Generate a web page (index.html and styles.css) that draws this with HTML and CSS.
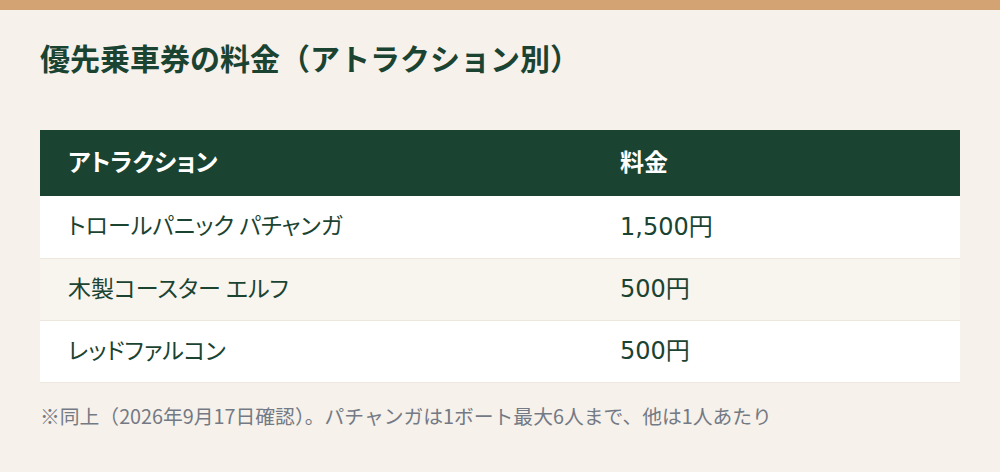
FILE: index.html
```html
<!DOCTYPE html>
<html lang="ja">
<head>
<meta charset="utf-8">
<link rel="stylesheet" href="styles.css">
</head>
<body>
<div class="topbar"></div>
<main class="content">
  <h1 class="title">優先乗車券の料金（アトラクション別）</h1>
  <table class="price-table">
    <thead>
      <tr><th class="col-name">アトラクション</th><th>料金</th></tr>
    </thead>
    <tbody>
      <tr><td>トロールパニック パチャンガ</td><td class="price">1,500円</td></tr>
      <tr><td>木製コースター エルフ</td><td class="price">500円</td></tr>
      <tr><td>レッドファルコン</td><td class="price">500円</td></tr>
    </tbody>
  </table>
  <p class="note">※同上（2026年9月17日確認）。パチャンガは1ボート最大6人まで、他は1人あたり</p>
</main>
</body>
</html>
```

FILE: styles.css
```css
html, body {
  margin: 0;
  padding: 0;
}
body {
  background: #f6f1ea;
  font-family: "Noto Sans CJK JP", "Noto Sans", sans-serif;
  color: #1b4332;
  width: 1000px;
  height: 472px;
  overflow: hidden;
}
.topbar {
  height: 10px;
  background: #d4a373;
}
.content {
  padding: 27px 40px 0;
}
.title {
  margin: 0;
  font-size: 30px;
  font-weight: 700;
  line-height: 40px;
  color: #1b4332;
}
.price-table {
  margin-top: 53px;
  width: 920px;
  border-collapse: collapse;
  background: #fff;
}
.price-table th {
  background: #1b4332;
  color: #fff;
  text-align: left;
  font-size: 24px;
  font-weight: 700;
  font-feature-settings: "palt";
  height: 66px;
  padding: 0 28px 5px;
  box-sizing: border-box;
}
.price-table .col-name {
  width: 60%;
}
.price-table td {
  font-size: 23px;
  font-feature-settings: "palt";
  height: 62px;
  padding: 0 28px 5px;
  box-sizing: border-box;
  border-bottom: 1px solid #ede7de;
}
.price-table td.price {
  font-family: "DejaVu Sans", "Noto Sans CJK JP", sans-serif;
  font-size: 24px;
}
.price-table tbody tr:nth-child(even) td {
  background: #f8f4ee;
}
.note {
  margin: 18px 0 0;
  font-size: 19.8px;
  color: #737a85;
}
```
